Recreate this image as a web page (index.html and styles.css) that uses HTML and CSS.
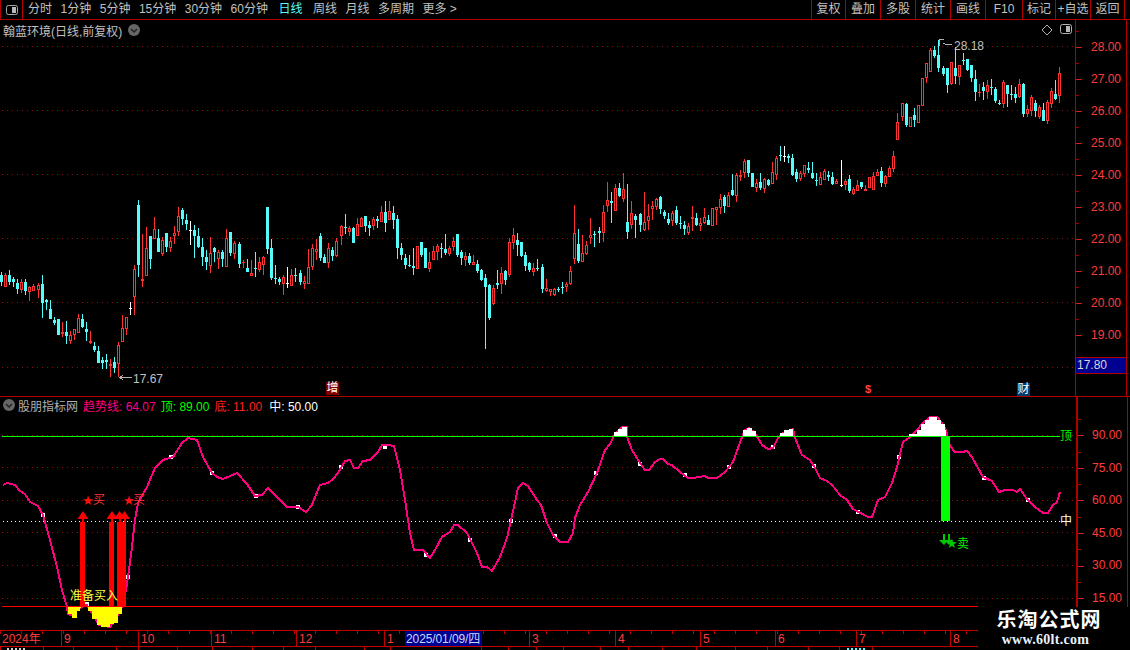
FILE: index.html
```html
<!DOCTYPE html>
<html lang="zh-CN">
<head>
    <meta charset="UTF-8">
    <title>翰蓝环境 日线</title>
    <link rel="stylesheet" href="styles.css">
</head>
<body>

    <!-- 顶部工具栏 -->
    <div class="toolbar">
        <div class="toolbar-toggle">
            <svg class="panel-icon" viewBox="0 0 12 10"><rect x="0.5" y="0.5" width="11" height="9" rx="2"/><rect class="panel-fill" x="6" y="2" width="4" height="6"/></svg>
        </div>
        <div class="periods">
            <span>分时</span><span>1分钟</span><span>5分钟</span><span>15分钟</span><span>30分钟</span><span>60分钟</span>
            <span class="active">日线</span><span>周线</span><span>月线</span><span>多周期</span><span>更多 &gt;</span>
        </div>
        <div class="actions">
            <span class="short">复权</span><span>叠加</span><span>多股</span><span>统计</span><span>画线</span><span class="wide">F10</span><span class="shorter">标记</span><span>+自选</span><span>返回</span>
        </div>
    </div>

    <!-- K线主图 -->
    <div class="pane price-pane">
        <div class="plot">
            <div class="chart-title">
                <span>翰蓝环境(日线,前复权)</span>
                <svg class="round-btn" viewBox="0 0 12 12"><circle cx="6" cy="6" r="6"/><path d="M3 5 L6 8 L9 5"/></svg>
            </div>
            <svg class="chart" viewBox="0 20 1075 376" shape-rendering="crispEdges">
                <g class="grid">
                    <line x1="2" x2="1075" y1="46.5" y2="46.5"/>
                    <line x1="2" x2="1075" y1="110.5" y2="110.5"/>
                    <line x1="2" x2="1075" y1="174.5" y2="174.5"/>
                    <line x1="2" x2="1075" y1="238.5" y2="238.5"/>
                    <line x1="2" x2="1075" y1="302.5" y2="302.5"/>
                    <line x1="2" x2="1075" y1="367.5" y2="367.5"/>
                </g>
                <g id="candles"></g>
                <path class="note-line" d="M939.5 46 V39.5 H944 M943 43 L947 45 L952 44"/>
                <text class="note" x="954" y="50">28.18</text>
                <path class="note-line" d="M120 377.5 H132 M123 375 L120 377.5 L123 380"/>
                <text class="note" x="133" y="383">17.67</text>
                <polygon class="note-line" points="1047,25 1052,30 1047,35 1042,30" shape-rendering="auto"/>
                <g transform="translate(1060 24)">
                    <rect class="note-line" x="0.5" y="0.5" width="11" height="9" rx="2" shape-rendering="auto"/>
                    <rect class="panel-fill" x="6" y="2" width="4" height="6"/>
                </g>
                <text class="dollar" x="865" y="393">$</text>
            </svg>
            <span class="event event-red event-zeng">增</span>
            <span class="event event-blue event-cai">财</span>
        </div>
        <div class="axis price-axis">
            <span class="tick">28.00</span><span class="tick">27.00</span><span class="tick">26.00</span>
            <span class="tick">25.00</span><span class="tick">24.00</span><span class="tick">23.00</span>
            <span class="tick">22.00</span><span class="tick">21.00</span><span class="tick">20.00</span>
            <span class="tick">19.00</span>
            <span class="last-price">17.80</span>
        </div>
    </div>

    <!-- 副图指标 -->
    <div class="pane indicator-pane">
        <div class="plot">
            <div class="legend">
                <svg class="round-btn" viewBox="0 0 12 12"><circle cx="6" cy="6" r="6"/><path d="M3 5 L6 8 L9 5"/></svg>
                <span class="legend-name">股朋指标网</span>
                <span class="c-pink">趋势线: 64.07</span>
                <span class="c-green">顶: 89.00</span>
                <span class="c-red">底: 11.00</span>
                <span class="c-white">中: 50.00</span>
            </div>
            <svg class="chart" viewBox="0 397 1076 233" shape-rendering="crispEdges">
                <g class="grid">
                    <line x1="2" x2="1076" y1="435.5" y2="435.5"/>
                    <line x1="2" x2="1076" y1="467.5" y2="467.5"/>
                    <line x1="2" x2="1076" y1="500.5" y2="500.5"/>
                    <line x1="2" x2="1076" y1="532.5" y2="532.5"/>
                    <line x1="2" x2="1076" y1="565.5" y2="565.5"/>
                    <line x1="2" x2="1076" y1="598.5" y2="598.5"/>
                </g>
                <line class="mid-line" x1="3" x2="1060" y1="521.5" y2="521.5"/>

                <g id="trend"></g>

                <!-- 底部黄色区域 -->
                <path class="fill-yellow" d="M68 607 V614 H72 V618 H77 V611 H80 V608 H81 V607 Z"/>
                <path class="fill-yellow" d="M88 607 V611 H92 V619 H97 V625 H101 V627 H110 V624 H114 V623 H118 V614 H122 V607 Z"/>
                <!-- 顶部白色区域 -->
                <path class="fill-white" d="M614 436 V432 H618 V429 H622 V427 H627 V436 Z"/>
                <path class="fill-white" d="M743 436 V430 H747 V428 H752 V431 H756 V436 Z"/>
                <path class="fill-white" d="M780 436 V433 H784 V430 H789 V429 H793 V436 Z"/>
                <path class="fill-white" d="M909 436 V434 H917 V430 H921 V424 H925 V420 H929 V417 H937 V420 H941 V424 H945 V430 H946 V436 Z"/>

                <line class="top-line" x1="2" x2="1060" y1="436.5" y2="436.5"/>
                <line class="bottom-line" x1="2" x2="978" y1="606.5" y2="606.5"/>

                <!-- 买入信号 -->
                <g class="buy">
                    <rect x="80" y="522" width="5" height="84"/>
                    <rect x="109" y="522" width="5" height="84"/>
                    <rect x="117" y="522" width="9" height="84"/>
                    <rect x="82" y="518" width="2" height="4"/>
                    <rect x="111" y="518" width="2" height="4"/>
                    <rect x="119" y="518" width="2" height="4"/>
                    <rect x="124" y="518" width="2" height="4"/>
                    <polygon points="83,511 88.5,519 77.5,519" shape-rendering="auto"/>
                    <polygon points="112,511 117.5,519 106.5,519" shape-rendering="auto"/>
                    <polygon points="119.5,511 125,519 114,519" shape-rendering="auto"/>
                    <polygon points="124.5,511 130,519 119,519" shape-rendering="auto"/>
                </g>
                <text class="star-red" x="82" y="505">★</text>
                <text class="star-red" x="123" y="505">★</text>
                <text class="sign-red" x="93" y="504">买</text>
                <text class="sign-red" x="133" y="504">买</text>
                <text class="sign-yellow" x="70" y="600">准备买入</text>

                <!-- 卖出信号 -->
                <rect class="sell" x="941" y="437" width="9" height="84"/>
                <g class="sell-dim">
                    <rect x="943" y="534" width="2" height="7"/>
                    <rect x="948" y="534" width="2" height="7"/>
                    <polygon points="939,540 948,540 944,545" shape-rendering="auto"/>
                    <polygon points="944,540 953,540 949,545" shape-rendering="auto"/>
                </g>
                <text class="star-green" x="946" y="548">★</text>
                <text class="sign-green" x="957" y="548">卖</text>
                <text class="sign-green" x="1060" y="440">顶</text>
                <text class="sign-white" x="1060" y="525">中</text>
            </svg>
        </div>
        <div class="axis indicator-axis">
            <span class="tick">90.00</span><span class="tick">75.00</span><span class="tick">60.00</span>
            <span class="tick">45.00</span><span class="tick">30.00</span><span class="tick">15.00</span>
        </div>
    </div>

    <!-- 时间轴 -->
    <div class="time-axis" id="timeAxis"></div>
    <div class="sub-strip" id="subStrip"></div>

    <!-- 水印 -->
    <div class="watermark">
        <div class="wm-title">乐淘公式网</div>
        <div class="wm-url">www.60lt.com</div>
    </div>

    <script src="chart.js"></script>
</body>
</html>
```

FILE: styles.css
```css
body {
    margin: 0;
    width: 1130px;
    height: 650px;
    overflow: hidden;
    position: relative;
    background-color: #000;
    color: #c0c0c0;
    font-family: "Liberation Sans", "Noto Sans CJK SC", sans-serif;
    font-size: 12px;
}

/* 工具栏 */
.toolbar {
    display: flex;
    height: 19px;
    line-height: 19px;
    border-bottom: 1px solid #b00000;
}
.toolbar-toggle {
    width: 23px;
    box-sizing: border-box;
    border-left: 1px solid #b00000;
    border-right: 1px solid #b00000;
    display: flex;
    align-items: center;
    justify-content: center;
}
.panel-icon {
    width: 12px;
    height: 10px;
    fill: none;
    stroke: #a8a8a8;
}
.panel-fill {
    fill: #b8b8b8;
    stroke: none;
}
.periods {
    display: flex;
    gap: 8.5px;
    padding-left: 5px;
}
.periods .active {
    margin: 0 2px;
    color: #54fcfc;
}
.actions {
    display: flex;
    margin-left: auto;
    margin-right: 5px;
}
.actions span {
    width: 35px;
    box-sizing: border-box;
    text-align: center;
    border-left: 1px solid #b00000;
}
.actions span:last-child {
    border-right: 1px solid #b00000;
}
.actions .wide {
    width: 37px;
}
.actions .short {
    width: 34px;
}
.actions .shorter {
    width: 33px;
}

/* 图区 */
.pane {
    display: flex;
}
.price-pane {
    height: 376px;
    border-bottom: 1px solid #b00000;
}
.indicator-pane {
    height: 233px;
}
.plot {
    position: relative;
    width: 1075px;
}
.indicator-pane .plot {
    width: 1076px;
}
.chart {
    display: block;
    width: 100%;
    height: 100%;
}
.chart-title {
    position: absolute;
    top: 2px;
    left: 3px;
    display: flex;
    align-items: center;
    gap: 6px;
    height: 16px;
}
.round-btn {
    width: 12px;
    height: 12px;
}
.round-btn circle {
    fill: #666;
}
.round-btn path {
    fill: none;
    stroke: #222;
    stroke-width: 1.5;
}

.grid line {
    stroke: #8c1010;
    stroke-dasharray: 1 4;
}
.note {
    fill: #c0c0c0;
    font-size: 12px;
}
.note-line {
    fill: none;
    stroke: #b4b4b4;
}
.dollar {
    fill: #ff4040;
    font-size: 11px;
    font-weight: bold;
}

.event {
    position: absolute;
    width: 13px;
    height: 13px;
    line-height: 13px;
    text-align: center;
    color: #fff;
}
.event-red {
    background-color: #800000;
}
.event-blue {
    background-color: #003c6e;
}
.event-zeng {
    left: 326px;
    top: 362px;
}
.event-cai {
    left: 1017px;
    top: 363px;
}

/* 右侧坐标 */
.axis {
    position: relative;
    display: flex;
    flex-direction: column;
    box-sizing: border-box;
    color: #ff3c3c;
}
.price-axis {
    width: 52px;
    padding-top: 11px;
    border-left: 1px solid #b00000;
    border-right: 1px solid #b00000;
}
.indicator-axis {
    width: 52px;
    padding-top: 22px;
    border-left: 2px solid #b00000;
    border-right: 1px solid #b00000;
}
.tick {
    position: relative;
    flex: none;
    height: 32px;
    line-height: 32px;
    padding-left: 15px;
}
.indicator-axis .tick {
    height: 32.6px;
    line-height: 32.6px;
    padding-left: 14px;
}
.tick::before {
    content: "";
    position: absolute;
    left: 0;
    top: 50%;
    width: 6px;
    height: 1px;
    background-color: #d02020;
}
.tick::after {
    content: "";
    position: absolute;
    left: 0;
    top: 0;
    width: 3px;
    height: 1px;
    background-color: #a00000;
}
.last-price {
    position: absolute;
    left: 0;
    right: 0;
    top: 337px;
    height: 15px;
    line-height: 15px;
    padding-left: 1px;
    background-color: #000090;
    border-top: 1px solid #b00000;
    border-bottom: 1px solid #b00000;
    color: #d8d8d8;
}

/* 指标图例 */
.legend {
    position: absolute;
    top: 0;
    left: 3px;
    height: 16px;
    display: flex;
    align-items: center;
    gap: 5px;
    white-space: nowrap;
}
.legend-name {
    margin-left: -2px;
    color: #b0b0b0;
}
.c-pink { color: #ff0080; }
.c-green { color: #00ff00; }
.c-red { color: #ff2020; }
.c-white { color: #fff; margin-left: 2px; }

.mid-line {
    stroke: #fff;
    stroke-dasharray: 1 3;
}
.top-line {
    stroke: #00ff00;
}
.bottom-line {
    stroke: #ff0000;
}
.fill-yellow {
    fill: #ffff00;
}
.fill-white {
    fill: #fff;
}
.buy {
    fill: #ff0000;
}
.sell {
    fill: #00ff00;
}
.sell-dim {
    fill: #00c800;
}
.star-red {
    fill: #ff1010;
    font-size: 13px;
    font-family: "DejaVu Sans", sans-serif;
}
.star-green {
    fill: #00c800;
    font-size: 13px;
    font-family: "DejaVu Sans", sans-serif;
}
.sign-red { fill: #ff3232; font-size: 12px; }
.sign-yellow { fill: #ffff40; font-size: 12px; }
.sign-green { fill: #00f000; font-size: 12px; }
.sign-white { fill: #fff; font-size: 12px; }

/* 时间轴 */
.time-axis {
    display: flex;
    height: 15px;
    line-height: 17px;
    border-top: 1px solid #c00000;
    border-bottom: 1px solid #c00000;
    color: #ff3c3c;
    background-image: repeating-linear-gradient(to right, #c00000 0 1px, transparent 1px 21px);
    background-size: 100% 3px;
    background-repeat: no-repeat;
}
.time-cell {
    flex: none;
    box-sizing: border-box;
    padding-left: 2px;
    background-color: transparent;
}
.time-cell.month {
    border-left: 1px solid #c00000;
}
.time-cell.cursor {
    padding-left: 1px;
    background-color: #000090;
    color: #c8d8ff;
    white-space: nowrap;
    letter-spacing: -0.1px;
}
.sub-strip {
    display: flex;
    height: 3px;
    overflow: hidden;
}
.sub-cell {
    flex: none;
    box-sizing: border-box;
    border-left: 1px solid #c00000;
}
/* 下一栏只露出文字顶端的几个点 */
.sub-cell.speck-white::before,
.sub-cell.speck-cyan::before {
    content: "";
    display: block;
    height: 2px;
    margin-top: 1px;
    background-image: repeating-linear-gradient(to right, currentColor 0 2px, transparent 2px 4px);
}
.sub-cell.speck-white {
    padding: 0 17px 0 6px;
    color: #d0d0d0;
}
.sub-cell.speck-cyan {
    padding: 0 5px 0 7px;
    color: #54fcfc;
}

/* 水印 */
.watermark {
    position: absolute;
    left: 978px;
    top: 607px;
    width: 152px;
    height: 43px;
    background-color: #000;
    color: #fff;
    text-align: center;
}
.wm-title {
    margin-left: -10px;
    font-family: "Noto Sans CJK SC", sans-serif;
    font-size: 20px;
    font-weight: bold;
    line-height: 24px;
    letter-spacing: 1px;
}
.wm-url {
    margin-left: -17px;
    font-family: "Liberation Serif", serif;
    font-size: 14px;
    font-weight: bold;
    line-height: 18px;
    letter-spacing: 0.3px;
    color: #e8f2ff;
}
```

FILE: chart.js
```js
const CANDLE_STEP = 4.02;
const RED = '#ff3232';
const CYAN = '#54fcfc';

// 每根K线: 类型 最高 实体上 实体下 最低 (已换算成屏幕y坐标)
const candleSections = [
    {
        start: 2.33,
        rows: `c 272 275 282 286,r 273 275 287 287,c 270 275 282 285,c 277 279 282 287,c 279 283 289 294,r 279 282 290 293,
c 279 282 291 295,r 286 287 292 301,r 284 286 291 291,r 283 285 290 298,c 275 284 303 318,c 299 300 302 310,
c 300 309 319 319,c 317 320 323 325,c 319 319 335 335,r 322 332 334 337,c 321 332 336 344,r 331 335 341 344,
r 329 329 335 340,r 314 318 333 333,c 314 319 327 328,c 322 329 332 341,r 331 341 343 344,c 342 346 350 352,
c 346 351 363 363,c 357 360 363 369,c 354 360 362 369,r 359 364 366 377,c 357 362 368 373,r 342 345 364 377,
r 315 328 342 342,r 317 317 329 335,w 302 308 309 315,r 265 269 297 315,c 200 205 265 277,r 234 279 281 287,
r 227 248 276 276,c 236 236 259 269,r 217 229 239 239,c 229 238 252 252,r 237 240 254 256,c 233 233 247 252,
r 237 241 248 252,r 226 233 236 244,r 207 216 232 236,c 208 210 219 225,c 214 220 224 230,w 221 230 231 245,
c 225 230 236 258,c 228 236 247 248,c 238 247 257 266,c 250 257 262 270,r 237 253 266 273,c 247 248 252 262,
r 250 252 259 269,c 250 252 259 267,r 229 238 267 267,c 232 232 253 256,r 241 243 254 259,c 242 244 264 268,
r 260 262 263 268,c 259 268 272 272,r 260 273 276 276,c 252 268 269 277,r 257 262 270 272,r 256 257 265 275,
c 207 207 249 254,c 239 248 278 280,c 265 278 279 284,c 277 279 282 285,r 275 277 284 295,w 267 283 284 288,
r 269 275 286 286,c 268 275 276 282`
    },
    {
        start: 301.3,
        rows: `c 270 273 282 285,r 276 281 284 289,r 249 267 284 284,r 244 248 267 270,r 239 249 252 260,c 233 236 258 261,
c 254 257 263 263,r 243 248 263 268,c 247 250 256 261,r 238 241 256 257,r 225 226 236 245,c 214 227 228 234,
r 226 228 232 236,c 227 228 243 243,r 218 224 236 236,r 217 218 227 227,c 216 216 226 232,c 221 225 228 236,
r 217 219 226 230,c 216 219 221 228,r 206 212 222 222,c 201 212 223 232,r 201 211 220 220,c 206 213 220 229,
c 215 219 248 259,c 243 248 255 260,c 254 258 265 269,c 255 265 266 267,c 248 266 268 275,r 246 246 269 269,
c 242 242 255 257,c 248 248 268 268,r 252 262 269 272,r 246 251 260 260,r 244 246 252 260,c 243 248 249 258,
c 234 249 253 255,r 246 248 254 256,r 237 241 247 251,c 234 234 255 257,c 250 252 258 265,r 252 256 260 266,
c 253 256 263 265,r 255 262 265 265,c 260 264 271 273,c 269 270 280 281,c 274 278 287 349,c 284 285 318 320,
r 285 288 304 305,c 270 283 285 289,r 267 273 284 294,c 270 271 280 285,r 238 242 275 277,r 228 235 243 249,
c 233 240 245 256,c 242 242 256 257,c 252 255 266 271,c 262 263 270 272,r 263 268 272 276,c 259 268 269 271,
c 264 267 289 293,r 279 288 291 292,r 289 289 292 296,r 288 289 295 296,c 287 289 290 292,c 282 287 288 294,
r 282 284 287 292,r 266 271 284 285,r 205 233 259 264,c 229 244 261 263,r 235 253 262 262,r 241 245 254 255,
r 218 235 238 244,c 231 234 235 247`
    },
    {
        start: 600.3,
        rows: `c 227 231 233 243,r 205 212 233 242,r 182 200 206 212,c 192 201 203 223,r 184 188 211 211,c 183 188 196 197,
r 173 189 199 202,c 184 222 232 239,r 201 213 225 229,c 214 216 220 238,c 213 214 225 232,r 192 222 230 231,
r 204 216 221 230,r 201 206 209 220,r 198 199 207 210,c 196 197 209 214,c 210 212 216 219,c 213 219 223 225,
r 211 213 221 226,c 206 210 223 225,c 216 223 224 229,c 221 225 229 235,r 223 226 233 235,r 206 217 219 231,
c 213 218 225 226,r 218 223 226 231,r 208 217 223 224,c 215 220 225 225,r 208 208 226 226,r 207 207 210 225,
r 194 199 208 214,c 195 197 206 213,r 192 195 207 207,c 174 190 195 196,r 173 175 196 202,r 170 175 177 181,
r 159 161 173 178,c 160 160 173 177,c 173 173 187 187,r 179 183 188 192,c 173 182 188 190,r 178 179 189 193,
c 179 180 185 186,r 162 172 184 184,r 156 158 175 180,c 146 155 156 161,w 146 156 157 162,c 154 156 158 163,
c 154 158 175 176,c 169 172 179 182,r 171 173 179 181,r 165 165 174 177,c 162 168 170 173,c 162 173 178 179,
c 173 180 181 186,r 172 177 185 185,r 169 171 180 180,c 171 175 177 181,c 172 177 184 185,r 179 181 184 184,
w 160 185 186 187,r 179 181 185 190,c 175 179 191 193,r 187 189 194 195,r 180 185 191 191,c 182 182 187 189,
r 185 189 191 191,r 177 177 188 188,r 172 176 190 190,r 169 172 176 176,c 167 171 183 187,r 175 176 184 187,
r 166 168 177 177,r 151 156 169 172,r 113 122 140 140`
    },
    {
        start: 903.3,
        rows: `r 103 103 117 121,c 103 104 125 127,r 117 117 127 127,c 108 115 120 127,r 105 105 123 123,r 78 78 106 106,
r 63 63 78 83,r 48 50 72 72,c 46 50 56 58,c 40 55 68 72,c 66 68 74 76,c 68 68 85 93,r 62 62 84 85,c 47 68 76 84,
r 65 65 77 85,c 53 60 61 65,c 59 59 70 71,c 65 65 78 82,c 70 79 92 101,r 84 92 93 97,c 82 87 91 100,r 80 85 92 99,
c 79 87 88 95,c 87 89 101 103,c 100 103 104 105,r 80 82 104 108,c 85 85 94 107,c 85 94 95 100,c 87 94 98 103,
r 79 84 97 98,c 83 84 114 117,r 105 109 114 117,r 95 97 111 116,c 100 103 111 117,r 105 107 117 119,
c 103 110 121 121,r 100 102 121 124,r 88 91 104 108,c 80 94 99 100,r 67 73 96 103`
    }
];

// 趋势线折点
const trendPoints = [
    [3, 485], [7, 483], [15, 485], [20, 491], [25, 494], [30, 502], [38, 506], [43, 515], [50, 540], [57, 567],
    [62, 590], [67, 607], [68, 614], [74, 616], [77, 610], [81, 607], [87, 605], [88, 607], [92, 613], [99, 625],
    [110, 627], [118, 615], [122, 607], [126, 590], [128, 577], [132, 547], [135, 520], [138, 503], [147, 487],
    [155, 468], [163, 460], [173, 457], [182, 443], [188, 438], [197, 440], [203, 457], [212, 473], [217, 477],
    [223, 479], [230, 476], [237, 473], [247, 484], [255, 496], [262, 495], [268, 488], [277, 497], [287, 507],
    [298, 507], [306, 512], [312, 505], [320, 485], [328, 483], [333, 479], [338, 473], [345, 461], [350, 460],
    [354, 468], [358, 468], [363, 461], [370, 460], [378, 452], [382, 445], [388, 445], [394, 446], [400, 470],
    [405, 500], [410, 533], [414, 550], [423, 550], [430, 558], [435, 550], [442, 537], [450, 532], [454, 525],
    [458, 525], [467, 533], [477, 553], [482, 567], [487, 567], [492, 571], [500, 557], [507, 538], [515, 502],
    [518, 488], [523, 483], [528, 486], [537, 500], [541, 505], [547, 523], [553, 535], [560, 542], [568, 542],
    [573, 533], [575, 518], [580, 505], [588, 492], [597, 473], [605, 450], [610, 444], [614, 436], [617, 432],
    [622, 427], [627, 427], [627, 437], [632, 450], [640, 463], [645, 470], [649, 470], [655, 462], [660, 459],
    [663, 459], [668, 464], [672, 465], [680, 472], [688, 478], [693, 478], [705, 476], [708, 478], [717, 478],
    [725, 472], [733, 462], [742, 437], [745, 430], [749, 428], [755, 433], [762, 445], [768, 449], [773, 448],
    [778, 438], [783, 433], [793, 429], [795, 438], [802, 455], [810, 460], [815, 468], [820, 478], [827, 481],
    [832, 485], [840, 495], [847, 500], [853, 509], [868, 517], [872, 517], [878, 500], [885, 497], [892, 483],
    [897, 467], [903, 442], [910, 437], [917, 430], [922, 424], [930, 417], [937, 417], [942, 423], [946, 430],
    [950, 446], [955, 452], [962, 452], [967, 451], [972, 457], [978, 468], [983, 477], [992, 481], [999, 492],
    [1005, 490], [1013, 490], [1017, 492], [1020, 489], [1027, 499], [1035, 507], [1043, 513], [1048, 513],
    [1053, 505], [1057, 502], [1060, 492]
];

// 趋势线上的白色小方块
const trendMarks = [
    [43, 515], [87, 604], [128, 577], [171, 457], [212, 473], [256, 496], [298, 507], [341, 467], [385, 447],
    [426, 555], [470, 540], [511, 521], [555, 536], [596, 473], [640, 464], [685, 475], [729, 467], [773, 447],
    [814, 466], [858, 512], [899, 457], [984, 478], [1028, 500]
];

// 时间轴: 起点x 文字
const timeLabels = [
    [0, '2024年', ''], [61, '9', 'month'], [138, '10', 'month'], [211, '11', 'month'], [296, '12', 'month'],
    [384, '1', 'month'], [405, '2025/01/09/四', 'cursor'], [482, '', ''], [529, '3', 'month'], [615, '4', 'month'],
    [700, '5', 'month'], [775, '6', 'month'], [856, '7', 'month'], [950, '8', 'month'], [980, '', '']
];

const subCells = [
    [0, '', 'speck-white'], [43, '', ''], [73, '', ''], [116, '', ''], [138, '', ''], [177, '', ''], [212, '', ''],
    [252, '', ''], [283, '', ''], [315, '', ''], [364, '', ''], [390, '', ''], [481, '', ''], [508, '', ''],
    [536, '', ''], [563, '', ''], [600, '', ''], [628, '', ''], [662, '', ''], [696, '', ''], [735, '', ''],
    [767, '', ''], [808, '', ''], [839, '', 'speck-cyan'], [872, '', ''], [980, '', '']
];

function candleSvg(cx, type, hi, top, bot, lo) {
    const color = type === 'r' ? RED : type === 'w' ? '#fff' : CYAN;
    const h = Math.max(bot - top, 1);
    let out = `<rect x="${cx}" y="${hi}" width="1" height="${Math.max(lo - hi, 1)}" fill="${color}"/>`;
    out += `<rect x="${cx - 1}" y="${top}" width="3" height="${h}" fill="${color}"/>`;
    if (type === 'r' && h > 2) {
        out += `<rect x="${cx}" y="${top + 1}" width="1" height="${h - 2}" fill="#000"/>`;
    }
    return out;
}

function drawCandles() {
    let out = '';
    candleSections.forEach(section => {
        section.rows.split(',').forEach((row, i) => {
            const parts = row.trim().split(' ');
            const cx = Math.round(section.start + i * CANDLE_STEP) - 1;
            out += candleSvg(cx, parts[0], +parts[1], +parts[2], +parts[3], +parts[4]);
        });
    });
    document.getElementById('candles').innerHTML = out;
}

function drawTrend() {
    let out = '';
    trendMarks.forEach(m => {
        out += `<rect x="${m[0] - 2}" y="${m[1] - 2}" width="4" height="4" fill="#fff"/>`;
    });
    const pts = trendPoints.map(p => p.join(',')).join(' ');
    out += `<polyline points="${pts}" fill="none" stroke="#ff0080" stroke-width="2"/>`;
    document.getElementById('trend').innerHTML = out;
}

function fillCells(boxId, cells, cellClass) {
    const box = document.getElementById(boxId);
    cells.forEach((cell, i) => {
        if (i === cells.length - 1) return;
        const el = document.createElement('div');
        el.className = `${cellClass} ${cell[2]}`;
        el.style.width = `${cells[i + 1][0] - cell[0]}px`;
        el.textContent = cell[1];
        box.appendChild(el);
    });
}

drawCandles();
drawTrend();
fillCells('timeAxis', timeLabels, 'time-cell');
fillCells('subStrip', subCells, 'sub-cell');
```
